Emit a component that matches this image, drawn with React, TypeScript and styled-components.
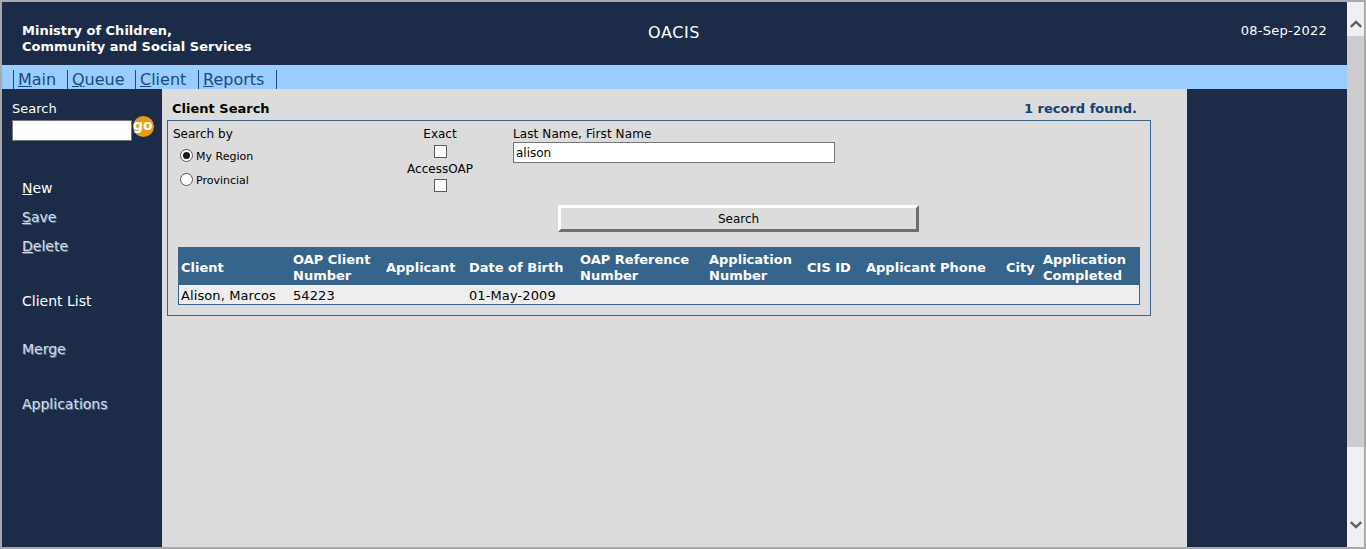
import styled, { createGlobalStyle } from "styled-components";

const GlobalStyle = createGlobalStyle`
    html, body {
        margin: 0;
        padding: 0;
        height: 100%;
        overflow: hidden;
        background: #ffffff;
    }
    * {
        box-sizing: border-box;
    }
`;

const Window = styled.div`
    width: 1366px;
    height: 549px;
    display: flex;
    border: 2px solid #a9a9a9;
    font-family: "DejaVu Sans", Verdana, sans-serif;
    font-size: 12px;
    color: #000000;
`;

const Page = styled.div`
    width: 1345px;
    display: flex;
    flex-direction: column;
`;

const Header = styled.header`
    height: 63px;
    background: #1c2b47;
    color: #ffffff;
    display: grid;
    grid-template-columns: 1fr 1fr;
    position: relative;
`;

const Ministry = styled.div`
    padding: 21px 0 0 20px;
    font-size: 13px;
    font-weight: 700;
    line-height: 16px;
`;

const AppName = styled.div`
    position: absolute;
    left: 646px;
    top: 21px;
    font-size: 16px;
    letter-spacing: 0.6px;
    line-height: 19px;
`;

const HeaderDate = styled.div`
    padding: 21px 20px 0 0;
    font-size: 13px;
    letter-spacing: 0.25px;
    line-height: 16px;
    text-align: right;
`;

const NavBar = styled.nav`
    height: 24px;
    background: #99ccff;
    padding: 5px 0 0 11px;
    display: flex;
    align-items: stretch;
`;

const NavItem = styled.a<{ $width: number }>`
    width: ${(p) => p.$width}px;
    padding-left: 4px;
    border-left: 1px solid #1a4a80;
    color: #1a4a80;
    font-size: 16px;
    line-height: 19px;
    &:last-child {
        border-right: 1px solid #1a4a80;
    }
    u {
        text-decoration-thickness: 1px;
    }
`;

const Body = styled.div`
    flex: 1;
    display: flex;
    min-height: 0;
`;

const Sidebar = styled.aside`
    width: 160px;
    background: #1c2b47;
    color: #ffffff;
    padding: 11px 0 0 10px;
`;

const SearchLabel = styled.div`
    font-size: 13px;
    line-height: 16px;
    margin-top: 1px;
`;

const QuickSearch = styled.div`
    display: flex;
    align-items: flex-start;
    height: 21px;
    margin-top: 3px;
`;

const QuickInput = styled.div`
    width: 120px;
    height: 21px;
    background: #ffffff;
    border: 1px solid #767676;
`;

const GoButton = styled.div`
    width: 21px;
    height: 21px;
    margin: -4px 0 0 1px;
    border-radius: 50%;
    background: #e89c16;
    color: #ffffff;
    font-size: 14px;
    font-weight: 700;
    line-height: 19px;
    white-space: nowrap;
`;

const ActionList = styled.div`
    padding: 0 0 0 10px;
    margin-top: 39px;
    display: flex;
    flex-direction: column;
`;

const ActionItem = styled.a<{ $top: number; $soft?: boolean }>`
    margin-top: ${(p) => p.$top}px;
    font-size: 14px;
    line-height: 17px;
    color: ${(p) => (p.$soft ? "#d6dde6" : "#ffffff")};
    text-shadow: ${(p) => (p.$soft ? "1px 1px 0 #5f7a9a" : "none")};
`;

const Content = styled.main`
    width: 1025px;
    background: #dcdcdc;
    padding: 12px 0 0 5px;
`;

const TitleRow = styled.div`
    width: 970px;
    height: 19px;
    padding-left: 5px;
    display: flex;
    justify-content: space-between;
    font-size: 13px;
    line-height: 16px;
    font-weight: 700;
`;

const RecordCount = styled.span`
    color: #12406f;
`;

const SearchPanel = styled.section`
    width: 984px;
    height: 196px;
    border: 1px solid #36648b;
    padding: 5px 10px 0 5px;
`;

const FormRow = styled.div`
    height: 79px;
    display: grid;
    grid-template-columns: 194px 146px 1fr;
`;

const ScopeColumn = styled.div`
    line-height: 16px;
`;

const RadioList = styled.div`
    padding-top: 1px;
`;

const RadioRow = styled.label`
    display: flex;
    align-items: center;
    gap: 3px;
    margin-left: 7px;
    height: 24px;
    font-size: 11px;
`;

const RadioText = styled.span`
    padding-top: 4px;
`;

const Radio = styled.span<{ $checked?: boolean }>`
    width: 13px;
    height: 13px;
    border: 1px solid #5a5a5a;
    border-radius: 50%;
    background: #ffffff;
    display: flex;
    align-items: center;
    justify-content: center;
    &::after {
        content: "";
        width: 7px;
        height: 7px;
        border-radius: 50%;
        background: ${(p) => (p.$checked ? "#1a1a1a" : "transparent")};
    }
`;

const FlagColumn = styled.div`
    display: flex;
    flex-direction: column;
    align-items: center;
    line-height: 16px;
`;

const FlagBox = styled.span`
    width: 13px;
    height: 13px;
    margin: 3px 0 3px;
    border: 1px solid #5a5a5a;
    background: #ffffff;
    &:last-child {
        margin-top: 2px;
    }
`;

const NameColumn = styled.div`
    line-height: 16px;
    letter-spacing: 0.1px;
`;

const NameInput = styled.div`
    width: 322px;
    height: 21px;
    background: #ffffff;
    border: 1px solid #767676;
    padding-left: 2px;
    line-height: 20px;
    letter-spacing: 0;
`;

const SearchButton = styled.button`
    display: block;
    width: 361px;
    height: 27px;
    margin: 0 0 15px 385px;
    padding: 0;
    background: #dcdcdc;
    border: 3px solid;
    border-color: #ffffff #6e6e6e #6e6e6e #ffffff;
    font-family: inherit;
    font-size: 12px;
    color: #000000;
`;

const ResultTable = styled.table`
    width: 962px;
    margin-left: 5px;
    table-layout: fixed;
    border-collapse: separate;
    border-spacing: 0;
    border: 1px solid #36648b;
`;

const HeadCell = styled.th<{ $width: number }>`
    width: ${(p) => p.$width}px;
    height: 37px;
    padding: 2px 0 0 2px;
    background: #36648b;
    color: #ffffff;
    font-size: 13px;
    font-weight: 700;
    line-height: 16px;
    text-align: left;
`;

const DataCell = styled.td`
    height: 19px;
    padding: 2px 0 0 2px;
    background: #eeeeee;
    font-size: 13px;
    letter-spacing: 0.1px;
    line-height: 16px;
    white-space: nowrap;
`;

const RightRail = styled.div`
    flex: 1;
    background: #1c2b47;
`;

const Scrollbar = styled.div`
    width: 17px;
    display: flex;
    flex-direction: column;
    background: #f0f0f0;
`;

const ScrollButton = styled.div<{ $size: string; $gap: number }>`
    flex: ${(p) => p.$size};
    display: flex;
    align-items: flex-end;
    justify-content: center;
    padding-bottom: ${(p) => p.$gap}px;
`;

const ScrollThumb = styled.div`
    flex: 0 0 411px;
    background: #cdcdcd;
`;

const columns = [
    { title: "Client", width: 112 },
    { title: "OAP Client Number", width: 93 },
    { title: "Applicant", width: 83 },
    { title: "Date of Birth", width: 111 },
    { title: "OAP Reference Number", width: 129 },
    { title: "Application Number", width: 98 },
    { title: "CIS ID", width: 59 },
    { title: "Applicant Phone", width: 140 },
    { title: "City", width: 37 },
    { title: "Application Completed", width: 98 },
];

const row = ["Alison, Marcos", "54223", "", "01-May-2009", "", "", "", "", "", ""];

function Chevron({ up }: { up?: boolean }) {
    return (
        <svg width="12" height="8" viewBox="0 0 12 8">
            <path
                d={up ? "M0.8 7 L6 2 L11.2 7" : "M0.8 1 L6 6 L11.2 1"}
                fill="none"
                stroke="#606060"
                strokeWidth="2.4"
            />
        </svg>
    );
}

export default function App() {
    return (
        <>
            <GlobalStyle />
            <Window>
                <Page>
                    <Header>
                        <Ministry>
                            Ministry of Children,
                            <br />
                            Community and Social Services
                        </Ministry>
                        <AppName>OACIS</AppName>
                        <HeaderDate>08-Sep-2022</HeaderDate>
                    </Header>
                    <NavBar>
                        <NavItem $width={54}><u>M</u>ain</NavItem>
                        <NavItem $width={68}><u>Q</u>ueue</NavItem>
                        <NavItem $width={63}><u>C</u>lient</NavItem>
                        <NavItem $width={79}><u>R</u>eports</NavItem>
                    </NavBar>
                    <Body>
                        <Sidebar>
                            <SearchLabel>Search</SearchLabel>
                            <QuickSearch>
                                <QuickInput />
                                <GoButton>go</GoButton>
                            </QuickSearch>
                            <ActionList>
                                <ActionItem $top={0}><u>N</u>ew</ActionItem>
                                <ActionItem $top={12} $soft><u>S</u>ave</ActionItem>
                                <ActionItem $top={12} $soft><u>D</u>elete</ActionItem>
                                <ActionItem $top={38}>Client List</ActionItem>
                                <ActionItem $top={31} $soft>Merge</ActionItem>
                                <ActionItem $top={38} $soft>Applications</ActionItem>
                            </ActionList>
                        </Sidebar>
                        <Content>
                            <TitleRow>
                                <span>Client Search</span>
                                <RecordCount>1 record found.</RecordCount>
                            </TitleRow>
                            <SearchPanel>
                                <FormRow>
                                    <ScopeColumn>
                                        Search by
                                        <RadioList>
                                            <RadioRow><Radio $checked /><RadioText>My Region</RadioText></RadioRow>
                                            <RadioRow><Radio /><RadioText>Provincial</RadioText></RadioRow>
                                        </RadioList>
                                    </ScopeColumn>
                                    <FlagColumn>
                                        Exact
                                        <FlagBox />
                                        AccessOAP
                                        <FlagBox />
                                    </FlagColumn>
                                    <NameColumn>
                                        Last Name, First Name
                                        <NameInput>alison</NameInput>
                                    </NameColumn>
                                </FormRow>
                                <SearchButton>Search</SearchButton>
                                <ResultTable>
                                    <thead>
                                        <tr>
                                            {columns.map((c) => (
                                                <HeadCell key={c.title} $width={c.width}>{c.title}</HeadCell>
                                            ))}
                                        </tr>
                                    </thead>
                                    <tbody>
                                        <tr>
                                            {row.map((value, i) => (
                                                <DataCell key={i}>{value}</DataCell>
                                            ))}
                                        </tr>
                                    </tbody>
                                </ResultTable>
                            </SearchPanel>
                        </Content>
                        <RightRail />
                    </Body>
                </Page>
                <Scrollbar>
                    <ScrollButton $size="0 0 34px" $gap={8}><Chevron up /></ScrollButton>
                    <ScrollThumb />
                    <ScrollButton $size="1" $gap={18}><Chevron /></ScrollButton>
                </Scrollbar>
            </Window>
        </>
    );
}
